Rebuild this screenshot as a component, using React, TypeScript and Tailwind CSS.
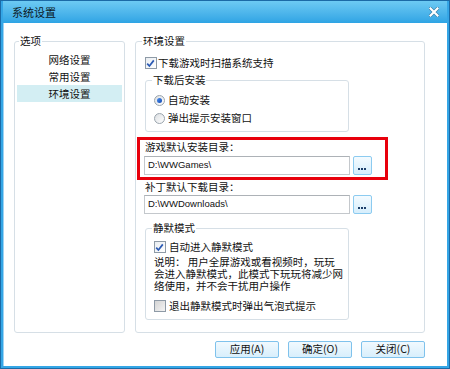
import React from "react";

const cjk = { fontFamily: '"Noto Sans CJK SC", "Noto Sans", sans-serif' };

function CheckBox({ checked }: { checked: boolean }) {
  return (
    <span
      className={`flex h-[12px] w-[12px] shrink-0 items-center justify-center border border-[#8e9aa6] ${
        checked ? "bg-gradient-to-br from-[#e9edf1] to-[#ffffff]" : "bg-gradient-to-br from-[#d4d4d4] to-[#f4f4f4]"
      }`}
    >
      {checked && (
        <svg width="9" height="9" viewBox="0 0 9 9">
          <path d="M1.2 4.6 L3.4 7 L7.8 1.4" fill="none" stroke="#2b5ab4" strokeWidth="1.7" />
        </svg>
      )}
    </span>
  );
}

function Radio({ checked }: { checked: boolean }) {
  return (
    <span className="flex h-[11px] w-[11px] shrink-0 items-center justify-center rounded-full border border-[#9aa4ad] bg-gradient-to-br from-[#dcdfe2] to-[#ffffff]">
      {checked && <span className="h-[5px] w-[5px] rounded-full bg-gradient-to-br from-[#4a8ff0] to-[#1548b0]" />}
    </span>
  );
}

function Browse() {
  return (
    <button className="flex h-[19px] w-[19px] items-end justify-center rounded-[2px] border border-[#8ccbf0] bg-gradient-to-b from-[#f4fbff] to-[#d6eefc] pb-[4px]">
      <span className="flex gap-[1px]">
        <span className="h-[2px] w-[2px] bg-[#1d3f6a]" />
        <span className="h-[2px] w-[2px] bg-[#1d3f6a]" />
        <span className="h-[2px] w-[2px] bg-[#1d3f6a]" />
      </span>
    </button>
  );
}

function PathInput({ value }: { value: string }) {
  return (
    <div className="flex items-center gap-[3px]">
      <div
        className="flex h-[19px] w-[206px] items-center border border-[#c4c8cc] border-t-[#adb2b7] bg-white pl-[3px] text-[9.5px] text-[#111]"
        style={{ fontFamily: '"Liberation Sans", sans-serif' }}
      >
        {value}
      </div>
      <Browse />
    </div>
  );
}

function Button({ label }: { label: string }) {
  return (
    <button className="flex h-[17px] w-[64px] items-center justify-center rounded-[2px] border border-[#7fc2ec] bg-gradient-to-b from-[#f1f9fe] to-[#d8effc] text-[10.5px] leading-none text-[#111]">
      {label}
    </button>
  );
}

export default function App() {
  const options = ["网络设置", "常用设置", "环境设置"];
  return (
    <div
      className="relative flex h-[369px] w-[450px] flex-col border border-[#1b6aa6] bg-[#35a6e6] px-[2px] pb-[2px] text-[10.5px] text-[#111]"
      style={cjk}
    >
      {/* title bar */}
      <div className="flex h-[22px] items-center justify-between bg-gradient-to-b from-[#6ccaf3] to-[#2ea4e4] pl-[9px] pr-[8px]">
        <span className="text-[11px] leading-none text-[#0c1824]">系统设置</span>
        <svg width="10" height="10" viewBox="0 0 10 10" className="mt-[-1px]">
          <path d="M1.5 1.5 L8.5 8.5 M8.5 1.5 L1.5 8.5" stroke="#3a7fa8" strokeWidth="3.4" strokeLinecap="square" />
          <path d="M1.5 1.5 L8.5 8.5 M8.5 1.5 L1.5 8.5" stroke="#ffffff" strokeWidth="2.2" strokeLinecap="square" />
        </svg>
      </div>

      {/* client area */}
      <div className="flex flex-1 flex-col border-l border-[#9fd3f2] bg-white pl-[10px] pr-[22px] pt-[12px]">
        <div className="flex h-[298px] gap-[10px]">
          {/* options */}
          <fieldset className="h-full w-[114px] rounded-[3px] border border-[#d6dfe6]">
            <legend className="ml-[4px] px-[1px] leading-[12px]">选项</legend>
            <div className="mx-[2px] mt-[4px] flex flex-col">
              {options.map((o, i) => (
                <div
                  key={o}
                  className={`flex h-[17px] items-center justify-center ${i === 2 ? "bg-[#d3eef3]" : ""}`}
                >
                  {o}
                </div>
              ))}
            </div>
          </fieldset>

          {/* environment */}
          <fieldset className="h-full w-[298px] rounded-[3px] border border-[#d6dfe6] pl-[9px]">
            <legend className="ml-[-3px] px-[1px] leading-[12px]">环境设置</legend>

            <div className="mt-[10px] flex h-[12px] items-center gap-[1px] leading-[12px]">
              <CheckBox checked />
              <span>下载游戏时扫描系统支持</span>
            </div>

            <fieldset className="mt-[5px] w-[204px] rounded-[3px] border border-[#d6dfe6] pb-[4px] pl-[8px]">
              <legend className="ml-[-2px] px-[1px] leading-[12px]">下载后安装</legend>
              <div className="mt-[5px] flex h-[18px] items-center gap-[3px]">
                <Radio checked />
                <span>自动安装</span>
              </div>
              <div className="flex h-[18px] items-center gap-[3px]">
                <Radio checked={false} />
                <span>弹出提示安装窗口</span>
              </div>
            </fieldset>

            <div className="mt-[9px] leading-[12px]">游戏默认安装目录：</div>
            <div className="ml-[-1px] mt-[3px]">
              <PathInput value="D:\WWGames\" />
            </div>

            <div className="mt-[6px] leading-[12px]">补丁默认下载目录：</div>
            <div className="ml-[-1px] mt-[2px]">
              <PathInput value="D:\WWDownloads\" />
            </div>

            <fieldset className="mt-[8px] w-[204px] rounded-[3px] border border-[#d6dfe6] pb-[7px] pl-[8px]">
              <legend className="ml-[-2px] px-[1px] leading-[12px]">静默模式</legend>
              <div className="mt-[7px] flex h-[12px] items-center gap-[3px]">
                <CheckBox checked />
                <span>自动进入静默模式</span>
              </div>
              <div className="mt-[3px] leading-[12px]">
                说明：&nbsp;用户全屏游戏或看视频时，玩玩
                <br />
                会进入静默模式，此模式下玩玩将减少网
                <br />
                络使用，并不会干扰用户操作
              </div>
              <div className="mt-[8px] flex h-[12px] items-center gap-[3px]">
                <CheckBox checked={false} />
                <span>退出静默模式时弹出气泡式提示</span>
              </div>
            </fieldset>
          </fieldset>
        </div>

        <div className="mt-[8px] flex justify-end gap-[9px]">
          <Button label="应用(A)" />
          <Button label="确定(O)" />
          <Button label="关闭(C)" />
        </div>
      </div>

      {/* highlight annotation */}
      <div className="pointer-events-none absolute left-[136px] top-[136px] h-[43px] w-[251px] border-[3px] border-[#e8000c]" />
    </div>
  );
}
